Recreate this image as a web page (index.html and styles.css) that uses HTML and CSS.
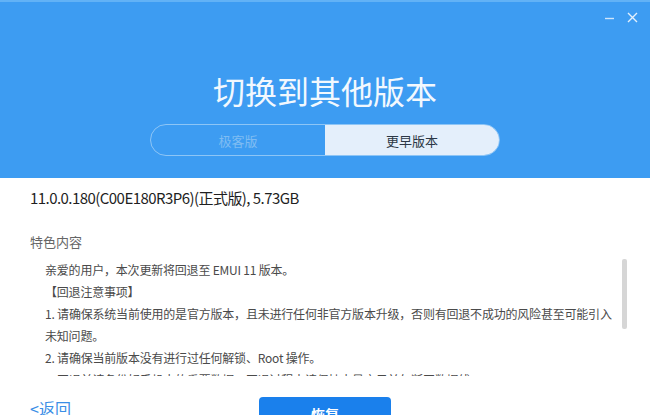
FILE: index.html
```html
<!DOCTYPE html>
<html lang="zh-CN">
<head>
    <meta charset="UTF-8">
    <meta name="viewport" content="width=device-width, initial-scale=1.0">
    <link rel="stylesheet" href="styles.css">
    <title>切换到其他版本</title>
</head>
<body>
    <div class="window">
        <!-- Cabecera azul -->
        <header class="hero">
            <div class="win-ctrl">
                <svg width="10" height="10" viewBox="0 0 10 10"><path d="M0 5.5h9" stroke="#cfe5fb" stroke-width="1.4"/></svg>
                <svg width="11" height="11" viewBox="0 0 11 11"><path d="M1 1l9 9M10 1l-9 9" stroke="#e3f0fc" stroke-width="1.4"/></svg>
            </div>
            <h1>切换到其他版本</h1>
            <div class="tabs">
                <span class="tab">极客版</span>
                <span class="tab active">更早版本</span>
            </div>
        </header>

        <!-- Detalle de la versión -->
        <section class="detail">
            <p class="ver">11.0.0.180(C00E180R3P6)(正式版), 5.73GB</p>
            <h2>特色内容</h2>
            <div class="notes-wrap">
                <div class="notes">
                    <p>亲爱的用户，本次更新将回退至 EMUI 11 版本。</p>
                    <p>【回退注意事项】</p>
                    <p>1. 请确保系统当前使用的是官方版本，且未进行任何非官方版本升级，否则有回退不成功的风险甚至可能引入未知问题。</p>
                    <p>2. 请确保当前版本没有进行过任何解锁、Root 操作。</p>
                    <p>3. 回退前请备份好手机中的重要数据，回退过程中请保持电量充足并勿断开数据线。</p>
                </div>
                <div class="scrollbar"></div>
            </div>
        </section>

        <footer class="actions">
            <a class="back" href="#">&lt;返回</a>
            <button class="restore">恢复</button>
            <span></span>
        </footer>
    </div>
</body>
</html>
```

FILE: styles.css
```css
body {
    margin: 0;
    padding: 0;
    font-family: "Noto Sans CJK SC", "Noto Sans", sans-serif;
    background-color: #fff;
    overflow: hidden;
}

.window {
    width: 650px;
    height: 415px;
    overflow: hidden;
}

/* Cabecera */
.hero {
    position: relative;
    background-color: #3d9cf2;
    border-top: 2px solid #62b2f6;
    padding: 68px 0 22px;
    display: flex;
    flex-direction: column;
    align-items: center;
}

.win-ctrl {
    position: absolute;
    top: 10px;
    right: 12px;
    display: flex;
    gap: 12px;
    align-items: center;
}

.hero h1 {
    margin: 0;
    font-size: 32px;
    line-height: 40px;
    font-weight: 400;
    color: #f2f8fe;
}

.tabs {
    margin-top: 14px;
    display: flex;
    width: 350px;
    height: 32px;
    border: 1px solid #8dc5f6;
    border-radius: 17px;
    overflow: hidden;
    box-sizing: border-box;
}

.tab {
    flex: 1;
    display: flex;
    align-items: center;
    justify-content: center;
    font-size: 13px;
    color: #7fbcf2;
}

.tab.active {
    background-color: #e4effb;
    color: #2c3846;
}

/* Detalle */
.detail {
    padding: 9px 0 0 30px;
}

.ver {
    margin: 0;
    font-size: 15px;
    line-height: 22px;
    letter-spacing: -0.55px;
    color: #1f1f1f;
}

.detail h2 {
    margin: 24px 0 8px;
    font-size: 13px;
    line-height: 18px;
    font-weight: 400;
    color: #666;
}

.notes-wrap {
    position: relative;
    height: 117px;
    overflow: hidden;
}

.notes {
    padding-left: 15px;
    width: 572px;
}

.notes p {
    margin: 0;
    font-size: 12px;
    line-height: 22px;
    letter-spacing: -0.2px;
    color: #4a4a4a;
}

.scrollbar {
    position: absolute;
    top: 0;
    left: 592px;
    width: 5px;
    height: 70px;
    border-radius: 2px;
    background-color: #d6d6d6;
}

/* Acciones */
.actions {
    margin-top: 21px;
    display: grid;
    grid-template-columns: 1fr 132px 1fr;
    align-items: start;
}

.back {
    margin-left: 30px;
    font-size: 16px;
    line-height: 22px;
    color: #3a8ee6;
    text-decoration: none;
}

.restore {
    height: 34px;
    border: none;
    border-radius: 4px;
    background-color: #1a80ec;
    color: #fff;
    font-family: inherit;
    font-size: 14px;
    font-weight: 700;
    padding: 0;
}
```
